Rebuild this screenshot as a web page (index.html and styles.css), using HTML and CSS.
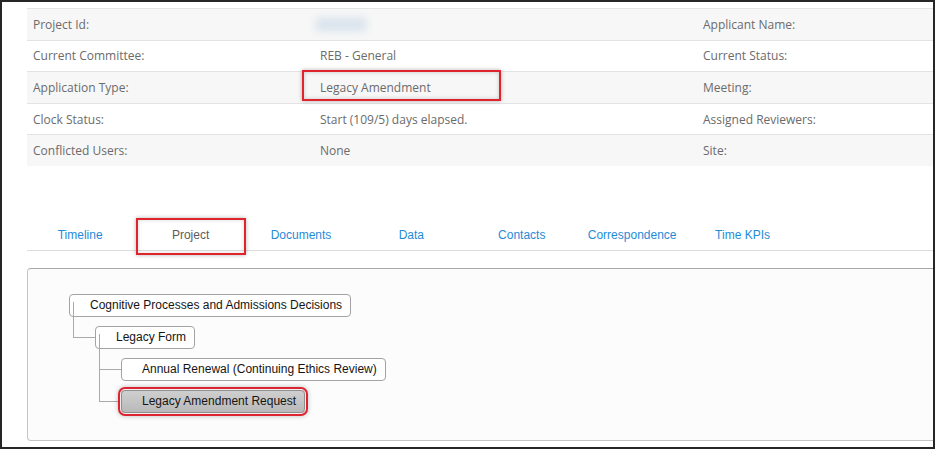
FILE: index.html
```html
<html lang="en">
<head>
    <meta charset="UTF-8">
    <meta name="viewport" content="width=device-width, initial-scale=1.0">
    <title>Project</title>
    <link rel="stylesheet" href="styles.css">
</head>
<body>
<div class="frame">
    <div class="content">
        <div class="info">
            <div class="row"><span>Project Id:</span><span><span class="blur"></span></span><span>Applicant Name:</span><span></span></div>
            <div class="row"><span>Current Committee:</span><span>REB - General</span><span>Current Status:</span><span></span></div>
            <div class="row"><span>Application Type:</span><span><span class="mark">Legacy Amendment</span></span><span>Meeting:</span><span></span></div>
            <div class="row"><span>Clock Status:</span><span>Start (109/5) days elapsed.</span><span>Assigned Reviewers:</span><span></span></div>
            <div class="row"><span>Conflicted Users:</span><span>None</span><span>Site:</span><span></span></div>
        </div>

        <ul class="tabs">
            <li><a href="#">Timeline</a></li>
            <li class="active"><a href="#">Project</a></li>
            <li><a href="#">Documents</a></li>
            <li><a href="#">Data</a></li>
            <li><a href="#">Contacts</a></li>
            <li><a href="#">Correspondence</a></li>
            <li><a href="#">Time KPIs</a></li>
        </ul>

        <div class="panel">
            <ul class="tree">
                <li>
                    <span class="node">Cognitive Processes and Admissions Decisions</span>
                    <ul>
                        <li>
                            <span class="node">Legacy Form</span>
                            <ul>
                                <li><span class="node">Annual Renewal (Continuing Ethics Review)</span></li>
                                <li><span class="node current">Legacy Amendment Request</span></li>
                            </ul>
                        </li>
                    </ul>
                </li>
            </ul>
        </div>
    </div>
</div>
</body>
</html>
```

FILE: styles.css
```css
body { margin: 0; background: #fff; }
.frame { width: 935px; height: 449px; box-sizing: border-box; border: 2px solid #262626; overflow: hidden; background: #fff; }
.content { width: 1100px; padding: 6px 0 0 25px; }

.info { width: 1075px; font: 12px "Open Sans", "Liberation Sans", sans-serif; color: #6b6b6b; }
.row { display: grid; grid-template-columns: 287px 383px 220px 1fr; align-items: center; height: 30.6px; border-top: 1px solid #e3e3e3; white-space: nowrap; }
.row > span { padding: 0 6px; }
.row:nth-child(odd) { background: #f7f7f7; }
.blur { display: inline-block; width: 50px; height: 13px; margin-left: -4px; background: #d8e2ec; filter: blur(4px); vertical-align: middle; }
.mark { position: relative; }
.mark::after { content: ""; position: absolute; left: -18px; top: -9px; width: 195px; height: 27px; border: 2px solid #e0242d; box-shadow: 0 0 4px rgba(0,0,0,.3), inset 0 0 4px rgba(0,0,0,.2); }

.tabs { list-style: none; margin: 54px 0 0; padding: 0; display: flex; border-bottom: 1px solid #dedede; font: 12px "Liberation Sans", Arial, sans-serif; }
.tabs li { width: 110.4px; text-align: center; line-height: 30px; position: relative; }
.tabs li:first-child { margin-left: -2px; }
.tabs a { color: #1f8bd8; text-decoration: none; }
.tabs li.active a { color: #5c5c5c; }
.tabs li.active::after { content: ""; position: absolute; left: 1px; top: -2px; width: 106px; height: 33px; border: 2px solid #e0242d; box-shadow: 0 0 4px rgba(0,0,0,.3), inset 0 0 4px rgba(0,0,0,.15); }

.panel { margin-top: 17px; height: 171px; border: 1px solid #c4c4c4; border-top-color: #a8a8a8; border-radius: 4px; background: #fcfcfc; }
.tree, .tree ul { list-style: none; margin: 0; padding: 0; }
.tree { padding: 25px 0 0 41px; font: 12px "Liberation Sans", Arial, sans-serif; color: #151515; }
.tree ul { padding-left: 26px; }
.tree ul li { position: relative; margin-top: 9px; }
.tree ul li::before { content: ""; position: absolute; left: -22px; top: -24px; width: 21px; height: 35px; border-left: 1px solid #a9a9a9; border-bottom: 1px solid #a9a9a9; }
.node { position: relative; display: inline-block; height: 21px; line-height: 21px; padding: 0 8px 0 20px; border: 1px solid #a3a3a3; border-radius: 4px; background: #fff; white-space: nowrap; }
.node.current { background: linear-gradient(#cfcfcf, #b9b9b9); border-color: #8f8f8f; box-shadow: 0 0 0 1px #f0f0f0, 0 0 0 3px #dc2530, 0 0 5px 3px rgba(0,0,0,.25); }
```
